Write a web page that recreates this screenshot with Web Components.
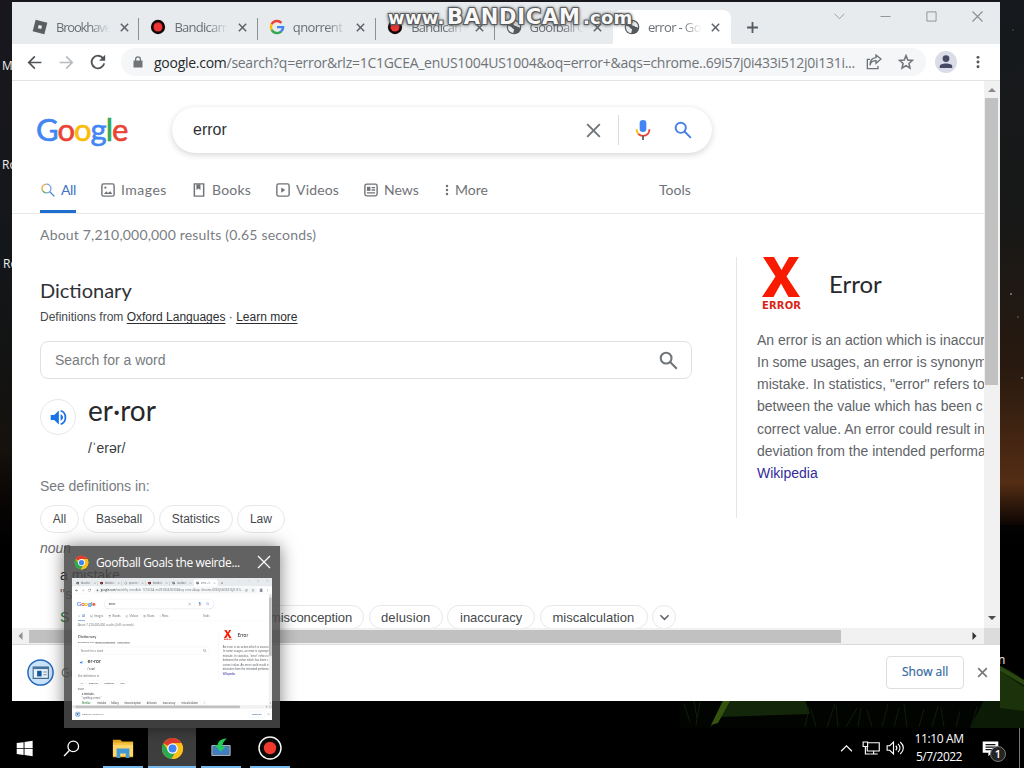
<!DOCTYPE html>
<html lang="en">
<head>
<meta charset="utf-8">
<title>error - Google Search</title>
<style>
html,body{margin:0;width:1024px;height:768px;overflow:hidden;background:#000}
</style>
</head>
<body>
<desk-top></desk-top>
<script>
const make = (name, html, setup) => {
  const t = document.createElement('template');
  t.innerHTML = html;
  customElements.define(name, class extends HTMLElement {
    static observedAttributes = ['name'];
    constructor() {
      super();
      this.attachShadow({mode: 'open'}).append(t.content.cloneNode(true));
    }
    connectedCallback() { if (setup) setup(this, this.shadowRoot); }
    attributeChangedCallback() { if (setup && this.isConnected) setup(this, this.shadowRoot); }
  });
};

const chromeLogo = '<circle cx="12" cy="12" r="11" fill="#fbc116"/><path d="M12 12 2.5 6.5A11 11 0 0 1 21.5 6.5H12z" fill="#e33b2e"/><path d="M2.5 6.5A11 11 0 0 0 11 23l4.8-8.5L7.5 14z" fill="#2da94f"/><path d="M12 6.5h9.5A11 11 0 0 1 11 23l5.5-9z" fill="#fbc116"/><circle cx="12" cy="12" r="5.5" fill="#fff"/><circle cx="12" cy="12" r="4.2" fill="#4285f4"/>';
const S = 'fill="none" stroke="currentColor"';
const icons = {
  roblox: '<path fill="#5b5e61" fill-rule="evenodd" d="M5.5 1 23 5.5 18.5 23 1 18.5zM10 9l-1.2 4.8 5 1.3 1.200-4.900z"/>',
  rec: '<circle cx="12" cy="12" r="10.700" fill="#150808"/><circle cx="12" cy="12" r="6.700" fill="#f03434"/>',
  g: '<g fill="none" stroke-width="3.600"><path stroke="#ea4335" d="M18.600 5.800A9 9 0 0 0 4 8"/><path stroke="#fbbc05" d="M4.100 7.700a9 9 0 0 0 0 8.600"/><path stroke="#34a853" d="M4 16a9 9 0 0 0 14.500 2.500"/><path stroke="#4285f4" d="M18 19A9 9 0 0 0 21.200 12.200H12"/></g>',
  globe: '<circle cx="12" cy="12" r="11" fill="#55595d"/><path fill="#e9ecee" d="M3 10c3 0 5 1 6 3s3 1 3 3-1 2-1 5C6 21 2 16 3 10zM13 3c1 2-1 3-2 4s1 3 3 3 3 2 5 2 2 2 1 4c3-5 0-12-7-13z"/>',
  x: `<path ${S} stroke-width="var(--sw,2.400)" d="M4 4l16 16M20 4 4 20"/>`,
  plus: `<path ${S} stroke-width="3.300" d="M12 2v20M2 12h20"/>`,
  down: `<path ${S} stroke-width="var(--sw,1.500)" d="M3 7l9 9 9-9"/>`,
  up: `<path ${S} stroke-width="2.200" d="M2 17 12 7l10 10"/>`,
  min: `<path ${S} stroke-width="2" d="M1 12h22"/>`,
  max: `<path ${S} stroke-width="2" d="M2 2h20v20H2z"/>`,
  back: '<path fill="currentColor" d="M23 10.700H6l7.500-7.500L11.600 1.300.900 12l10.700 10.700 1.900-1.900L6 13.300h17z"/>',
  fwd: '<path fill="currentColor" d="M1 10.700h17l-7.500-7.500 1.900-1.900L23.100 12 12.400 22.700l-1.900-1.900 7.500-7.500H1z"/>',
  reload: `<path ${S} stroke-width="2.800" d="M19.500 6.200A9.500 9.500 0 1 0 21.300 14"/><path fill="currentColor" d="M22.800 1v9.200h-9.200z"/>`,
  lock: '<path fill="currentColor" fill-rule="evenodd" d="M3 9h3V6.500a6 6 0 0 1 12 0V9h3v14H3zM8.500 9h7V6.500a3.500 3.500 0 0 0-7 0z"/>',
  share: `<path ${S} stroke-width="2" d="M6 8H2v14h16v-4M6 17c1-5 4-7 9-7V14l7.500-6.500L15 1.500v4C9 6 6 10 6 17z"/>`,
  star: `<path ${S} stroke-width="2.300" d="m12 2.500 2.700 6.500 7 .6-5.300 4.600 1.600 6.900-6-3.700-6 3.700 1.600-6.900L2.300 9.600l7-.6z"/>`,
  user: '<circle cx="12" cy="12" r="12" fill="#dadce8"/><circle cx="12" cy="8.300" r="3.700" fill="#464a63"/><path fill="#464a63" d="M5.200 18.500v-2c0-4 13.600-4 13.600 0v2z"/>',
  dots: '<g fill="currentColor"><circle cx="12" cy="4" r="2.500"/><circle cx="12" cy="12" r="2.500"/><circle cx="12" cy="20" r="2.500"/></g>',
  mic: '<rect x="8" width="8" height="14.500" rx="4" fill="#4285f4"/><path fill="none" stroke="#fbbc05" stroke-width="2.200" d="M4.400 11c0 2.500.800 4.500 2 5.700"/><path fill="none" stroke="#ea4335" stroke-width="2.200" d="M6.300 16.600c3 3.200 8.700 3.200 11.500 0 1.200-1.300 1.900-3 1.900-5.600"/><path stroke="#5f6368" stroke-width="2.200" d="M12 19v5"/>',
  find: `<circle cx="9" cy="9" r="6.800" ${S} stroke-width="var(--sw,2.600)"/><path ${S} stroke-width="var(--sw,2.600)" d="M14 14l8.500 8.500"/>`,
  findc: '<g fill="none" stroke-width="2.200"><path stroke="#e8a33a" d="M3 13.500A7.500 7.500 0 0 1 9.500 1.800"/><path stroke="#6f9fe8" d="M9.500 1.800a7.500 7.500 0 0 1 0 15"/><path stroke="#61a878" d="M9.500 16.800A7.500 7.500 0 0 1 3 13.500"/><path stroke="#4a7fd8" d="M15 15l8 8"/></g>',
  image: `<rect x="1.500" y="1.500" width="21" height="21" rx="3" ${S} stroke-width="2.400"/><path fill="currentColor" d="M5 19l4-5 3 3 4-3 3.500 5z"/><circle cx="7.500" cy="8" r="1.800" fill="currentColor"/>`,
  book: `<path ${S} stroke-width="2.500" d="M4 1.500h16v21H4z"/><path fill="currentColor" d="M7.500 2h7v10L11 9.500 7.500 12z"/>`,
  video: `<rect x="1.500" y="1.500" width="21" height="21" rx="3" ${S} stroke-width="2.400"/><path fill="currentColor" d="M9 7.500v9l7-4.500z"/>`,
  news: `<rect x="1.500" y="2" width="21" height="20" rx="3" ${S} stroke-width="2.400"/><path ${S} stroke-width="2.200" d="M13 8h6M13 12h6M5 17h14"/><path fill="currentColor" d="M5 6.500h6v7H5z"/>`,
  sound: '<path fill="#1a73e8" d="M1 8.500v7h5l6.500 6.500V2L6 8.500z"/><path fill="none" stroke="#1a73e8" stroke-width="2.500" d="M15 2.500c9 2.500 9 16.500 0 19"/><path fill="#1a73e8" d="M15 7.500v9c4.500-2 4.500-7 0-9z"/>',
  app: '<circle cx="12" cy="12" r="11.200" fill="#c9e3fb" stroke="#2568b8" stroke-width="1.300"/><path fill="#e9f5fd" stroke="#4a6b8c" stroke-width="1" d="M5.500 7.200h13.500v10H5.500z"/><path fill="#48749c" d="M5.500 7h13.500v2H5.500z"/><path fill="#145a9a" d="M9 10.500h4v5H9z"/><path stroke="#789" d="M14.500 11.500h3M14.500 14h3"/>',
  chrome: chromeLogo,
  win: '<path fill="#fff" d="M1 4.300 10.700 3v8.500H1zM12 2.800 23.500 1v10.500H12zM1 12.700h9.700V21L1 19.700zM12 12.700h11.500V23L12 21.200z"/>',
  wsearch: '<circle cx="14.500" cy="9" r="7.500" fill="none" stroke="#fff" stroke-width="1.800"/><path stroke="#fff" stroke-width="1.900" d="M9.300 14.500 1.500 22.500"/>',
  folder: '<path fill="#e8a91c" d="M1 3h8l2 2h12v17H1z"/><path fill="#ffd868" d="M1 8h22v13H1z"/><path fill="#4299d6" d="M5 12.500h14V23h-4v-5H9v5H5z"/><path fill="#f7c43e" d="M1 6h22v2H1z"/>',
  device: '<path fill="#5779a0" stroke="#b6cbe0" stroke-width="1" d="M1 9h22v12H1z"/><path fill="#3f7fc8" d="M3.500 11h17v8h-17z"/><path fill="#25cf57" d="M19 .5c-7 0-11 4-11 8H4.500l7 8 6-6h-4c0-4 2-7 5.500-10z"/>',
  bandi: '<circle cx="12" cy="12" r="11" fill="#080808" stroke="#fff" stroke-width="1.400"/><circle cx="12" cy="12" r="6.200" fill="#f23a2f"/>',
  net: '<g fill="none" stroke="#fff" stroke-width="1.500"><path d="M8 5h15v11H7V10M11 20h10M15.500 16v4"/><path d="M1.500 4h6v6h-6zM4.500 10v10h6"/></g>',
  vol: '<g fill="none" stroke="#fff" stroke-width="1.500"><path d="M1.500 9v6H5l5 5V4L5 9zM13 9c2 2 2 4 0 6M16 6.500c3.500 3.500 3.500 7.500 0 11M19 4c5.500 5 5.500 11 0 16"/></g>',
  note: '<path fill="#fff" d="M1 2h22v16h-9l-5 5v-5H1z"/><path stroke="#111" stroke-width="1.600" d="M5 6.500h14M5 10h14M5 13.500h10"/>',
};

make('ui-icon', '<style>:host{display:inline-flex;flex:none}svg{display:block;width:var(--s);height:var(--s)}</style><svg viewBox="0 0 24 24"></svg>',
  (h, r) => {
    h.style.setProperty('--s', (h.getAttribute('size') || 16) + 'px');
    r.querySelector('svg').innerHTML = icons[h.getAttribute('name')] || '';
  });

make('browser-tab', `<style>
:host{display:flex;align-items:center;box-sizing:border-box;width:118.400px;height:34px;padding-left:11px;border-right:1px solid #8b9095;border-image:linear-gradient(transparent 26%,#8b9095 26% 85%,transparent 85%) 1;color:#6a6f73;font:13px "Open Sans","Noto Sans",sans-serif}
:host([active]){background:#fff;border:0;border-radius:8px 8px 0 0}
:host([last]){border-color:transparent;border-image:none}
.t{width:54px;margin-left:8px;overflow:hidden;white-space:nowrap;-webkit-mask:linear-gradient(90deg,#000 62%,transparent);mask:linear-gradient(90deg,#000 62%,transparent)}
.c{margin-left:8.500px;color:#5f6367;--sw:3.300}
</style><ui-icon size="16"></ui-icon><span class="t"><slot></slot></span><ui-icon class="c" name="x" size="11"></ui-icon>`,
  (h, r) => r.querySelector('ui-icon').setAttribute('name', h.getAttribute('icon')));

make('tab-strip', `<style>
:host{display:flex;height:42px;background:#e7ebee;padding-left:9px;color:#555a5e}
.tabs{display:flex;align-items:flex-end}
.plus{margin:18.500px 0 0 15px}
.ctl{display:flex;margin-left:auto;height:28px}
.ctl span{width:46px;display:grid;place-items:center;color:#8a8d90}
</style><div class="tabs">
<browser-tab icon="roblox"><fit-text w="61">Brookhaven</fit-text></browser-tab>
<browser-tab icon="rec"><fit-text w="54">Bandicam</fit-text></browser-tab>
<browser-tab icon="g"><fit-text w="56">qnorrent -</fit-text></browser-tab>
<browser-tab icon="rec"><fit-text w="54">Bandicam</fit-text></browser-tab>
<browser-tab icon="globe" last><fit-text w="56">Goofball G</fit-text></browser-tab>
<browser-tab icon="globe" active><fit-text w="60">error - Goo</fit-text></browser-tab>
</div><ui-icon class="plus" name="plus" size="13"></ui-icon>
<div class="ctl"><span><ui-icon name="down" size="13"></ui-icon></span><span><ui-icon name="min" size="11"></ui-icon></span><span><ui-icon name="max" size="11"></ui-icon></span><span><ui-icon name="x" size="15" style="--sw:1.800"></ui-icon></span></div>`);

make('tool-bar', `<style>
:host{display:flex;align-items:center;box-sizing:border-box;height:37px;border-bottom:1px solid #e2e3e4;background:#fff;padding-left:15px;color:#505458}
.b{width:32px;margin-left:-1px;margin-right:1px;display:grid;place-items:center}
.o{display:flex;align-items:center;box-sizing:border-box;width:805px;height:28px;border-radius:14px;background:#f4f6f7;margin-left:-2px;padding:0 12px 0 11px;font:14px "Open Sans","Noto Sans",sans-serif;color:#707377}
.u{margin-left:10px;white-space:nowrap;width:701px}
b{font-weight:400;color:#27292c}
.end{display:flex;align-items:center;gap:15px;margin-left:9px}
</style>
<span class="b" style="margin-left:-9px"><ui-icon name="back" size="15"></ui-icon></span>
<span class="b" style="color:#b9bcbf"><ui-icon name="fwd" size="15"></ui-icon></span>
<span class="b"><ui-icon name="reload" size="16"></ui-icon></span>
<div class="o" style="margin-left:6px"><ui-icon name="lock" size="12"></ui-icon><span class="u"><fit-text w="701"><b>google.com</b>/search?q=error&amp;rlz=1C1GCEA_enUS1004US1004&amp;oq=error+&amp;aqs=chrome..69i57j0i433i512j0i131i...</fit-text></span>
<ui-icon name="share" size="16" style="margin-left:11px"></ui-icon><ui-icon name="star" size="16" style="margin-left:16px"></ui-icon></div>
<div class="end"><ui-icon name="user" size="22"></ui-icon><ui-icon name="dots" size="14" style="margin-left:-1px"></ui-icon></div>`);

make('google-header', `<style>
:host{display:flex;padding:26px 0 0 24px;height:46px;align-items:center}
.l{width:91px;margin-right:45px;font:400 31px/44px "Lato","Open Sans",sans-serif;-webkit-text-stroke:.600px;white-space:nowrap;height:46px}
.s{display:flex;align-items:center;box-sizing:border-box;width:540px;height:46px;border-radius:23px;box-shadow:0 2px 6px rgba(32,33,36,.18),0 0 1px rgba(32,33,36,.05);padding:0 20px 0 21px;font:16px "Liberation Sans",Arial,sans-serif;color:#303236}
.s i{width:1px;height:30px;background:#dadce0;margin:0 14px 0 15px}
</style><div class="l"><fit-text w="91"><span style="color:#4285f4">G</span><span style="color:#ea4335">o</span><span style="color:#fbbc05">o</span><span style="color:#4285f4">g</span><span style="color:#34a853">l</span><span style="color:#ea4335">e</span></fit-text></div>
<div class="s"><fit-text w="34">error</fit-text><ui-icon name="x" size="19" style="margin-left:auto;color:#70757a"></ui-icon><i></i><ui-icon name="mic" size="20"></ui-icon><ui-icon name="find" size="18" style="margin-left:21px;color:#4780e8"></ui-icon></div>`);

make('search-tab', `<style>
:host{display:flex;align-items:center;height:46px;color:#707377}
:host([active]){color:#3f72c4;box-shadow:inset 0 -3px #1f6fd0}
span{display:flex;width:20px;justify-content:flex-start}
:host([active]) span{width:21px;padding-left:1px;box-sizing:border-box}
:host([dots]) span{width:11px;margin-left:-3px;padding-right:3px}
slot{display:block;padding-bottom:2px}
</style><span><ui-icon size="14"></ui-icon></span><slot></slot>`,
  (h, r) => {
    const i = r.querySelector('ui-icon');
    if (h.hasAttribute('dots')) i.setAttribute('size', 12);
    i.setAttribute('name', h.getAttribute('icon'));
  });

make('search-nav', `<style>
:host{display:flex;align-items:flex-end;gap:25px;height:60px;border-bottom:1px solid #e6e7e9;padding-left:28px;font:14px "Lato","Open Sans",sans-serif;color:#707377}
.tools{line-height:46px;margin-left:146px}
</style>
<search-tab icon="findc" active><fit-text w="15">All</fit-text></search-tab>
<search-tab icon="image"><fit-text w="46">Images</fit-text></search-tab>
<search-tab icon="book"><fit-text w="39">Books</fit-text></search-tab>
<search-tab icon="video"><fit-text w="43">Videos</fit-text></search-tab>
<search-tab icon="news"><fit-text w="35">News</fit-text></search-tab>
<search-tab icon="dots" dots><fit-text w="33">More</fit-text></search-tab>
<div class="tools"><fit-text w="32">Tools</fit-text></div>`);

make('word-chip', `<style>
:host{display:flex;align-items:center;justify-content:center;box-sizing:border-box;height:28px;border:1px solid #e6e7ea;border-radius:14px;flex:none;font:12px "Liberation Sans",Arial,sans-serif;color:#44484b;background:#fff}
:host([small]){height:24px;font-size:13px}
</style><slot></slot>`);

make('dictionary-card', `<style>
:host{display:block;width:724px;box-sizing:border-box;padding-left:28px;font:14px "Liberation Sans",Arial,sans-serif;color:#6a6d71}
.stats{height:42px;line-height:41px;font-family:"Lato",sans-serif;color:#7a7e83}
h2{margin:20px 0 0;height:30px;font:20px/28px "Lato",sans-serif;color:#303236}
.from{height:22px;font-size:12px;line-height:22px;color:#44484b;white-space:nowrap}
u{color:#2c2e32;text-underline-offset:2px}
.box{display:flex;align-items:center;justify-content:space-between;box-sizing:border-box;width:652px;height:38px;border:1px solid #dfe1e5;border-radius:8px;margin-top:13px;padding:0 13px 0 14px;color:#787c81}
.w{display:flex;gap:12px;margin-top:14px;height:65px}
.a{display:grid;place-items:center;box-sizing:border-box;width:36px;height:36px;border:1px solid #e6e7ea;border-radius:50%;margin-top:6px}
.big{height:35px;font:28px/34px "Lato",sans-serif;color:#26282b}
.ph{line-height:20px;margin-top:10px;color:#3a3c40}
.see{margin-top:18px;height:20px;line-height:20px;color:#787c81}
.chips{display:flex;gap:4.300px;margin-top:9px}
.n{margin-top:5px;height:20px;line-height:20px;font-style:italic}
.d{margin:7px 0 0 20px;height:20px;line-height:20px;color:#2c2e32}
.q{margin:-1px 0 0 20px;line-height:20px;height:20px}
.sim{display:flex;align-items:center;gap:4.500px;width:616px;margin:1px 0 0 20px;color:#188038}
.sim .s{margin-right:auto}
.covered{visibility:var(--covered,visible)}
</style>
<div class="stats"><fit-text w="276">About 7,210,000,000 results (0.65 seconds)</fit-text></div>
<h2><fit-text w="92">Dictionary</fit-text></h2>
<div class="from"><fit-text w="258">Definitions from <u>Oxford Languages</u> · <u>Learn more</u></fit-text></div>
<div class="box"><fit-text w="111">Search for a word</fit-text><ui-icon name="find" size="19" style="color:#70757a"></ui-icon></div>
<div class="w"><div class="a"><ui-icon name="sound" size="17"></ui-icon></div><div><div class="big"><fit-text w="68">er·ror</fit-text></div><div class="ph"><fit-text w="37">/ˈerər/</fit-text></div></div></div>
<div class="see"><fit-text w="110">See definitions in:</fit-text></div>
<div class="chips"><word-chip style="width:39px">All</word-chip><word-chip style="width:71.500px">Baseball</word-chip><word-chip style="width:73.500px">Statistics</word-chip><word-chip style="width:48px">Law</word-chip></div>
<div class="n">noun</div>
<div class="d">a mistake.</div>
<div class="q">"s<span class="covered">pelling errors"</span></div>
<div class="sim"><span class="s">S<span class="covered">imilar:</span></span><word-chip small class="covered" style="width:64px">mistake</word-chip><word-chip small class="covered" style="width:58px">fallacy</word-chip><word-chip small style="width:106px"><fit-text w="82">misconception</fit-text></word-chip><word-chip small style="width:74px"><fit-text w="49">delusion</fit-text></word-chip><word-chip small style="width:88px"><fit-text w="62">inaccuracy</fit-text></word-chip><word-chip small style="width:108px"><fit-text w="82">miscalculation</fit-text></word-chip><word-chip small style="width:24px"><ui-icon name="down" size="11" style="--sw:3.400;color:#60646a"></ui-icon></word-chip></div>`);

make('knowledge-panel', `<style>
:host{display:block;box-sizing:border-box;width:248px;height:261px;margin-top:43px;border-left:1px solid #e4e5e7;padding-left:20px;overflow:hidden;font:14px/22.150px "Liberation Sans",Arial,sans-serif;color:#606468;white-space:pre}
.h{display:flex;height:56px;align-items:center}
.x{width:40px;height:56px;margin:0 27px 0 5px;color:#f41a05}
h2{font:24px "Lato",sans-serif;color:#26282b;margin:-3px 0 0}
p{margin:16px 0 0}
</style><div class="h"><svg class="x" viewBox="0 0 40 56"><path fill="#f81b00" d="M1 0h11l7.500 13L27 0h10L24.500 19.500 38 40H26.500L19 26.500 11.500 40H0L13.500 19.500z"/><text x="0" y="52" font-family="DejaVu Sans" font-weight="700" font-size="10" textLength="39" fill="#d8261a">ERROR</text></svg><h2><fit-text w="53">Error</fit-text></h2></div><p>An error is an action which is inaccur
In some usages, an error is synonym
mistake. In statistics, "error" refers to
between the value which has been c
correct value. An error could result in
deviation from the intended performa
<span style="color:#332c9c">Wikipedia</span></p>`);

make('scroll-bars', `<style>
:host{display:block;background:#f1f1f1}
.v{display:flex;flex-direction:column;align-items:center;width:16px;height:547px}
.v b{width:13px;height:287px;background:#c1c1c1;margin-right:1px}
.h{display:flex;align-items:center;height:16px;width:972px}
.h b{width:812px;height:13px;background:#c1c1c1}
svg{width:17px;height:17px;flex:none;margin-right:1px}
svg.e{margin-left:auto}.v svg.e{margin:auto 1px 0 0}
:host([dir=h]) .v,:host([dir=v]) .h{display:none}
</style><div class="v"><svg viewBox="0 0 17 17"><path d="M5 11h8L9 7z" fill="#8a8a8a"/></svg><b></b><svg class="e" viewBox="0 0 17 17"><path d="M5 5h8L9 9z" fill="#4c4c4c"/></svg></div>
<div class="h"><svg style="margin:0" viewBox="0 0 17 17"><path d="M10.500 4v8l-4-4z" fill="#909090"/></svg><b></b><svg class="e" viewBox="0 0 17 17"><path d="M6.500 4v8l4-4z" fill="#333"/></svg></div>`);

make('download-bar', `<style>
:host{display:flex;align-items:center;box-sizing:border-box;height:57px;border-top:1px solid #dadbdc;background:#fff;padding:0 11px 2px 15px;font:12px "Open Sans","Noto Sans",sans-serif;color:#5f6368}
.n{margin-left:7px}
.n span{visibility:var(--covered,visible)}
.btn{display:grid;place-items:center;box-sizing:border-box;width:78px;height:33px;border:1px solid #dcdee1;border-radius:4px;color:#33699f;-webkit-text-stroke:.200px;margin-left:auto;margin-right:12px;padding-bottom:1px}
</style><ui-icon name="app" size="27"></ui-icon><span class="n">Go<span>ofball_Goals.exe</span></span><span class="btn"><fit-text w="46">Show all</fit-text></span><ui-icon name="x" size="13" style="--sw:3;color:#777"></ui-icon>`);

make('browser-window', `<style>
:host{display:block;width:988px;height:699px;background:#fff;overflow:hidden}
.v{display:grid;grid-template:547px 16px/972px 16px}
.p{overflow:hidden}
.c{display:flex}
.corner{background:#dcdcdc}
</style><tab-strip></tab-strip><tool-bar></tool-bar>
<div class="v"><div class="p"><google-header></google-header><search-nav></search-nav><div class="c"><dictionary-card></dictionary-card><knowledge-panel></knowledge-panel></div></div><scroll-bars dir="v"></scroll-bars><scroll-bars dir="h"></scroll-bars><div class="corner"></div></div>
<download-bar></download-bar>`);

make('window-preview', `<style>
:host{display:block;box-sizing:border-box;width:216px;height:182px;background:rgba(72,72,72,.86);padding:0 8px;box-shadow:0 0 16px rgba(0,0,0,.5)}
.h{display:flex;align-items:center;height:32px;font:12px "Open Sans","Noto Sans",sans-serif;color:#fff;white-space:nowrap}
.h fit-text{margin:0 auto 0 7px}
.t{width:200px;height:142px;overflow:hidden;background:#fff}
browser-window{transform-origin:0 0;transform:scale(.2025,.2031)}
</style><div class="h"><ui-icon name="chrome" size="15" style="margin-left:2px"></ui-icon><fit-text w="144">Goofball Goals the weirde...</fit-text><ui-icon name="x" size="18" style="--sw:1.700;margin-right:-1px"></ui-icon></div><div class="t"><browser-window></browser-window></div>`);

make('task-button', `<style>
:host{display:grid;place-items:center;width:49px;height:40px;box-sizing:border-box;color:#fff}
:host([open]){background:linear-gradient(#76b9ed,#76b9ed) center bottom/40px 2px no-repeat}
:host([active]){background:linear-gradient(#76b9ed,#76b9ed) center bottom/48px 2px no-repeat,#3e3e3e;width:48px}
</style><slot></slot>`);

make('task-bar', `<style>
:host{display:flex;align-items:center;width:1024px;height:40px;background:#000;color:#fff;font:12px/18px "Open Sans","Noto Sans",sans-serif}
.tray{display:flex;align-items:center;margin-left:auto;height:40px}
.clock{display:flex;flex-direction:column;align-items:center;width:60px;margin-left:5px}
.note{display:flex;margin-left:13px;position:relative;width:37px;height:40px;align-items:center}
.badge{position:absolute;left:8px;top:18px;box-sizing:border-box;width:16px;height:16px;border-radius:50%;background:#242424;border:1px solid #777;font:600 11px/14px "Open Sans",sans-serif;text-align:center}
.edge{width:5px;height:40px;border-left:1px solid #777;box-sizing:border-box}
</style>
<task-button style="width:48px"><ui-icon name="win" size="17"></ui-icon></task-button>
<task-button style="width:50px;padding-right:3px"><ui-icon name="wsearch" size="17"></ui-icon></task-button>
<task-button open style="width:50px"><ui-icon name="folder" size="22"></ui-icon></task-button>
<task-button active><ui-icon name="chrome" size="23"></ui-icon></task-button>
<task-button open style="width:50px"><ui-icon name="device" size="20"></ui-icon></task-button>
<task-button open style="width:48px"><ui-icon name="bandi" size="24"></ui-icon></task-button>
<div class="tray"><ui-icon name="up" size="13"></ui-icon><ui-icon name="net" size="18" style="margin-left:9px"></ui-icon><ui-icon name="vol" size="18" style="margin-left:6px"></ui-icon>
<div class="clock"><fit-text w="49">11:10 AM</fit-text><fit-text w="46">5/7/2022</fit-text></div>
<div class="note"><ui-icon name="note" size="17"></ui-icon><span class="badge">1</span></div><div class="edge"></div></div>`);

make('water-mark', `<style>
:host{display:flex;align-items:baseline;gap:2px;height:28px;line-height:28px;font:700 18px/28px "DejaVu Sans",sans-serif;color:#f8f8f8;white-space:nowrap;-webkit-text-stroke:2px #6c6f72;paint-order:stroke fill;text-shadow:0 0 3px #444,0 1px 4px #555,0 0 3px #666}
.b{font-size:21px}
</style><fit-text w="57">www.</fit-text><fit-text class="b" w="134">BANDICAM</fit-text><fit-text w="50">.com</fit-text>`);

make('desk-top', `<style>
:host{display:block;position:relative;width:1024px;height:768px;overflow:hidden;background:linear-gradient(#19171e 0,#14171a 250px,#121313 350px,#15110d 450px,#080504 500px,#000 550px)}
.bg,.win,.task,.prev,.mark,.lab{position:absolute}
.bg{left:0;top:0}
.win{left:12px;top:2px;--covered:hidden}
.task{left:0;top:728px}
.prev{left:64px;top:546px}
.mark{left:388px;top:3px}
.lab{font:12px/16px "Open Sans","Noto Sans",sans-serif;color:#eee}
</style>
<svg class="bg" width="1024" height="768"><defs><linearGradient id="sky" x2="0" y2="1"><stop offset="0" stop-color="#16191d"/><stop offset=".42" stop-color="#171817"/><stop offset=".7" stop-color="#28190f"/><stop offset=".92" stop-color="#542d14"/><stop offset="1" stop-color="#0c0503"/></linearGradient></defs>
<path fill="url(#sky)" d="M1000 0h24v525h-24z"/><g fill="#828485"><circle cx="1011" cy="294" r="1"/><circle cx="1022" cy="378" r="1"/><circle cx="1018" cy="317" r=".7"/><circle cx="1013" cy="30" r=".6"/></g>
<path fill="#020402" d="M680 700h344v28H680z"/><path fill="#14260a" d="M710 728l13-28h82l5 14-90 3z"/><path fill="#0b1b05" d="M970 728l31-62c12 5 18 10 23 15v47z"/><path fill="#35520f" d="M711 725l12-24h7l-12 22z"/><path fill="#2b4810" d="M1000 666l24 14v5l-24-14z"/><path fill="#1b320b" d="M1000 671l24 16v24l-24-3z"/>
<path fill="none" stroke="#101d0a" d="M684 704l6 18M694 701l3 17M700 702l-4 23M805 727l4-20M816 727l-5-18M827 727l8-23M838 727l-2-21M846 727l11-19M858 727l3-19M872 727l-5-17M882 727l6-23M894 727l5-19M907 727l-3-23M919 727l5-18M932 727l6-21M944 727l-3-19M956 727l4-16M971 727l6-20M985 727l-4-18M994 727l5-20"/></svg>
<span class="lab" style="left:2px;top:58px">M</span><span class="lab" style="left:2px;top:157px">Ro</span><span class="lab" style="left:3px;top:256px">Ro</span><span class="lab" style="left:998px;top:652px">n</span>
<browser-window class="win"></browser-window>
<task-bar class="task"></task-bar>
<window-preview class="prev"></window-preview>
<water-mark class="mark"></water-mark>`);

/* Spreads its text over a fixed width by adjusting the letter spacing. */
customElements.define('fit-text', class extends HTMLElement {
  constructor() {
    super();
    this.attachShadow({mode: 'open'}).innerHTML = '<style>:host{display:inline-block;white-space:nowrap}span{display:inline-block}</style><span><slot></slot></span>';
  }
  connectedCallback() {
    const w = +this.getAttribute('w'), s = this.shadowRoot.querySelector('span');
    s.style.letterSpacing = (w - s.offsetWidth) / this.textContent.length + 'px';
    this.style.width = w + 'px';
  }
});
</script>
</body>
</html>
